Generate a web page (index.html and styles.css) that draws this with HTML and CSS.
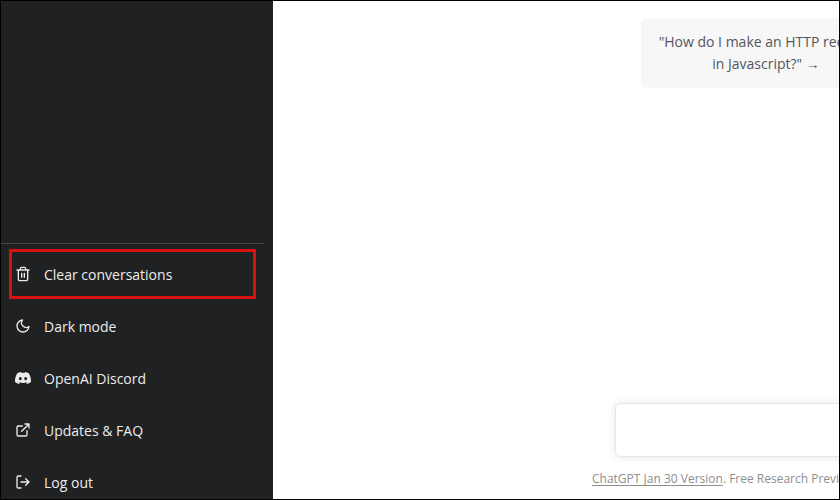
FILE: index.html
```html
<!DOCTYPE html>
<html lang="en">
<head>
  <meta charset="UTF-8" />
  <meta name="viewport" content="width=device-width, initial-scale=1.0"/>
  <title>ChatGPT</title>
  <link rel="stylesheet" href="styles.css">
</head>
<body>
  <aside class="sidebar">
    <nav class="menu">
      <button class="menu-item highlighted" type="button">
        <svg class="icon" viewBox="0 0 24 24"><path d="M3 6h18M19 6v14a2 2 0 0 1-2 2H7a2 2 0 0 1-2-2V6M8 6V4a2 2 0 0 1 2-2h4a2 2 0 0 1 2 2v2M10 11v6M14 11v6"/></svg>
        Clear conversations
      </button>
      <button class="menu-item" type="button">
        <svg class="icon" viewBox="0 0 24 24"><path d="M21 12.79A9 9 0 1 1 11.21 3 7 7 0 0 0 21 12.79z"/></svg>
        Dark mode
      </button>
      <a class="menu-item" href="#discord">
        <svg class="icon solid" viewBox="0 0 24 24"><path fill-rule="evenodd" d="M20.3 4.4A19.8 19.8 0 0 0 15.4 2.9l-.7 1.3a18 18 0 0 0-5.4 0l-.7-1.3a19.7 19.7 0 0 0-4.9 1.5C.6 9-.3 13.6.1 18.1a19.9 19.9 0 0 0 6 3l1.3-2-1.9-.9.4-.3a14.2 14.2 0 0 0 12.2 0l.4.3-1.9.9 1.3 2a19.8 19.8 0 0 0 6-3c.5-5.2-.8-9.7-3.6-13.7zM8 15.300c-1.200 0-2.200-1.100-2.200-2.400S6.800 10.500 8 10.500s2.200 1.100 2.200 2.400-1 2.400-2.200 2.400zm8 0c-1.200 0-2.200-1.100-2.200-2.400s1-2.400 2.200-2.400 2.200 1.100 2.200 2.400-1 2.400-2.200 2.400z"/></svg>
        OpenAI Discord
      </a>
      <a class="menu-item" href="#faq">
        <svg class="icon" viewBox="0 0 24 24"><path d="M18 13v6a2 2 0 0 1-2 2H5a2 2 0 0 1-2-2V8a2 2 0 0 1 2-2h6M15 3h6v6M10 14 21 3"/></svg>
        Updates &amp; FAQ
      </a>
      <button class="menu-item" type="button">
        <svg class="icon" viewBox="0 0 24 24"><path d="M9 21H5a2 2 0 0 1-2-2V5a2 2 0 0 1 2-2h4M16 17l5-5-5-5M21 12H9"/></svg>
        Log out
      </button>
    </nav>
  </aside>

  <main class="chat">
    <button class="example" type="button">"How do I make an HTTP request in Javascript?" →</button>
    <div class="bottom">
      <textarea class="prompt" rows="1" aria-label="Message"></textarea>
      <p class="note"><a href="#release-notes">ChatGPT Jan 30 Version</a>. Free Research Preview.</p>
    </div>
  </main>
</body>
</html>
```
FILE: styles.css
```css
:root {
  --sidebar-bg: #202123;
  --sidebar-text: #ececec;
  --highlight: #d8100f;
  --example-bg: #f7f7f8;
  --muted: #8e8e8e;
}

* {
  box-sizing: border-box;
}

body {
  display: flex;
  height: 100vh;
  margin: 0;
  border: 1px solid #000;
  overflow: hidden;
  background: #fff;
  font-family: "Open Sans", "Noto Sans", sans-serif;
  font-size: 14px;
}

.sidebar {
  display: flex;
  flex: 0 0 272px;
  flex-direction: column;
  justify-content: flex-end;
  padding-right: 9px;
  background: var(--sidebar-bg);
}

/* the last row runs on below the window edge */
.menu {
  display: flex;
  flex-direction: column;
  gap: 2px;
  margin-bottom: -8px;
  padding: 5px 8px 0;
  border-top: 1px solid #444547;
}

.menu-item {
  display: flex;
  align-items: center;
  gap: 13px;
  height: 50px;
  padding: 0 3px;
  border: 3px solid transparent;
  background: none;
  color: var(--sidebar-text);
  font: inherit;
  text-decoration: none;
  cursor: pointer;
}

.highlighted {
  border-color: var(--highlight);
}

.icon {
  width: 16px;
  height: 16px;
  fill: none;
  stroke: currentColor;
  stroke-width: 2;
  stroke-linecap: round;
  stroke-linejoin: round;
}

.icon.solid {
  fill: currentColor;
  stroke: none;
}

.chat {
  display: flex;
  flex: 1;
  flex-direction: column;
  justify-content: space-between;
  min-width: 0;
  padding: 17px 0 10px 319px;
  overflow: hidden;
}

.example {
  flex-shrink: 0;
  width: 250px;
  margin-left: 49px;
  padding: 13px 12px;
  border: 0;
  border-radius: 6px;
  background: var(--example-bg);
  color: #55555a;
  font: inherit;
  line-height: 22px;
  cursor: pointer;
}

.prompt {
  display: block;
  width: 768px;
  height: 54px;
  margin-left: 23px;
  padding: 16px;
  border: 1px solid #e6e6e6;
  border-radius: 6px;
  box-shadow: 0 0 10px rgba(0, 0, 0, 0.1);
  font: inherit;
  resize: none;
}

.note {
  margin: 12px 0 0;
  color: var(--muted);
  font-size: 12px;
  line-height: 20px;
  white-space: nowrap;
}

.note a {
  color: inherit;
  text-underline-offset: 2px;
}
```
